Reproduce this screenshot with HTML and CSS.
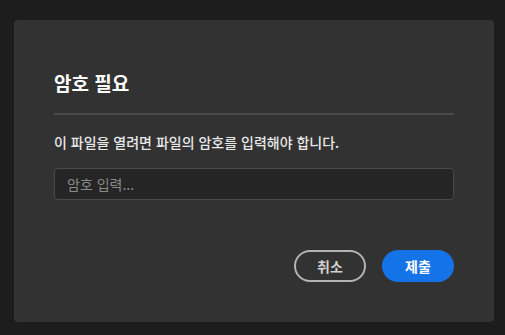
FILE: index.html
```html
<!DOCTYPE html>
<html lang="ko">
<head>
    <meta charset="UTF-8">
    <title>암호 필요</title>
    <link rel="stylesheet" href="styles.css">
</head>
<body>
    <div class="dialog">
        <h2 class="dialog-title">암호 필요</h2>
        <hr class="divider">
        <p class="dialog-text">이 파일을 열려면 파일의 암호를 입력해야 합니다.</p>
        <input class="password-input" type="password" placeholder="암호 입력...">
        <div class="actions">
            <button class="btn cancel-btn">취소</button>
            <button class="btn submit-btn">제출</button>
        </div>
    </div>
</body>
</html>
```

FILE: styles.css
```css
body {
    margin: 0;
    padding: 20px 11px 0 14px;
    background: #1d1d1d;
    font-family: "Noto Sans CJK KR", "Noto Sans", sans-serif;
}

.dialog {
    width: 400px;
    height: 222px;
    padding: 40px;
    background: #323232;
    border-radius: 4px;
}

.dialog-title {
    margin: 10px 0 0;
    font-size: 19px;
    line-height: 26px;
    font-weight: 700;
    color: #fff;
}

.divider {
    margin: 17px 0 0;
    border: none;
    height: 2px;
    background: #4b4b4b;
}

.dialog-text {
    margin: 16px 0 0;
    font-size: 14px;
    line-height: 22px;
    font-weight: 500;
    color: #e8e8e8;
}

.password-input {
    display: block;
    box-sizing: border-box;
    width: 100%;
    height: 32px;
    margin-top: 15px;
    padding: 0 12px;
    background: #252525;
    border: 1px solid #4a4a4a;
    border-radius: 4px;
    color: #ddd;
    font-family: inherit;
    font-size: 14px;
    outline: none;
}

.password-input::placeholder {
    color: #8a8a8a;
}

.actions {
    display: flex;
    justify-content: flex-end;
    gap: 16px;
    margin-top: 50px;
}

.btn {
    box-sizing: border-box;
    width: 72px;
    height: 32px;
    border-radius: 16px;
    font-family: inherit;
    font-size: 14px;
    font-weight: 700;
    cursor: pointer;
}

.cancel-btn {
    background: transparent;
    border: 2px solid #b3b3b3;
    color: #d0d0d0;
}

.submit-btn {
    background: #1473e6;
    border: none;
    color: #fff;
}
```
